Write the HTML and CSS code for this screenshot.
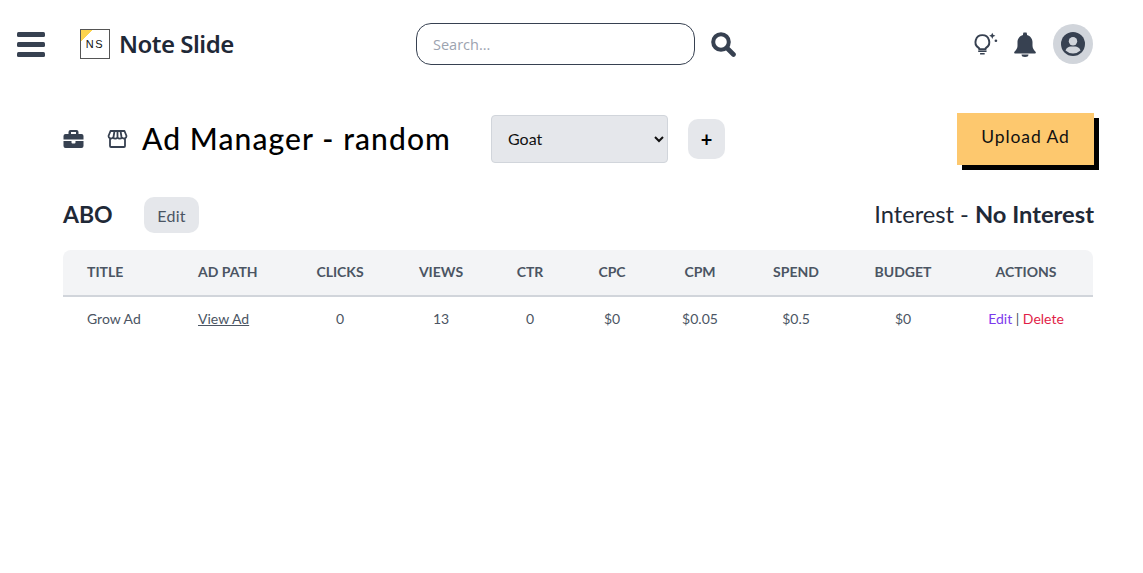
FILE: index.html
```html
<!DOCTYPE html>
<html lang="en">
<head>
  <meta charset="UTF-8">
  <meta name="viewport" content="width=device-width, initial-scale=1.0">
  <title>Note Slide - Ad Manager</title>
  <link rel="stylesheet" href="styles.css">
</head>
<body>
  <!-- Top bar -->
  <header class="topbar">
    <svg class="menu-icon" viewBox="0 0 28 25"><rect y="0" width="28" height="5" rx="1.500"/><rect y="10" width="28" height="5" rx="1.500"/><rect y="20" width="28" height="5" rx="1.500"/></svg>
    <div class="logo">
      <div class="logo-box">NS</div>
      <span class="logo-name">Note Slide</span>
    </div>
    <div class="search">
      <input type="text" class="search-input" placeholder="Search...">
      <svg class="search-icon" viewBox="0 0 25 25"><circle cx="10" cy="10" r="7.8" fill="none" stroke-width="4"/><path d="M16 16l6.5 6.5" fill="none" stroke-width="4.6" stroke-linecap="round"/></svg>
    </div>
    <div class="top-actions">
      <svg class="bulb-icon" viewBox="0 0 24 24"><path d="M9 3a6.600 6.600 0 0 0-3.800 12c.7.500.9 1 .9 1.600h5.800c0-.6.200-1.100.9-1.600A6.600 6.600 0 0 0 9 3z" fill="none" stroke="#374151" stroke-width="1.900"/><path d="M5 18.400h8M6.800 20.800h4.400" stroke="#374151" stroke-width="1.500" fill="none"/><path d="M18.500 .6l.9 2.100 2.100.9-2.100.9-.9 2.100-.9-2.100-2.100-.9 2.100-.9z" fill="#374151"/><circle cx="22" cy="8.400" r="1.300" fill="#374151"/></svg>
      <svg class="bell-icon" viewBox="0 0 22 25"><path d="M11 0a2 2 0 0 0-2 2v.9C5.600 3.800 3.500 6.700 3.500 10v3.500c0 2.500-1 4.300-3 6.200-.7.700-.2 1.800.8 1.800h19.400c1 0 1.500-1.100.8-1.800-2-1.900-3-3.700-3-6.200V10c0-3.300-2.100-6.200-5.500-7.100V2a2 2 0 0 0-2-2z"/><path d="M7.500 22.500h7a3.500 2.500 0 0 1-7 0z"/></svg>
      <div class="avatar">
        <svg viewBox="0 0 24 24"><circle cx="12" cy="12" r="12" fill="#374151"/><circle cx="12" cy="9.300" r="4.200" fill="#d1d5db"/><path d="M4.500 18.500c1-3 3.500-4 5-4h5c1.500 0 4 1 5 4a11 11 0 0 1-15 0z" fill="#d1d5db"/></svg>
      </div>
    </div>
  </header>

  <main class="content">
    <div class="title-row">
      <svg class="title-icon" viewBox="0 0 20 18"><path d="M7 0h6a2 2 0 0 1 2 2v2h3a2 2 0 0 1 2 2v3.500H0V6a2 2 0 0 1 2-2h3V2a2 2 0 0 1 2-2zm.5 2v2h5V2z" fill-rule="evenodd"/><path d="M0 11h8v1.500a1 1 0 0 0 1 1h2a1 1 0 0 0 1-1V11h8v5a2 2 0 0 1-2 2H2a2 2 0 0 1-2-2z"/></svg>
      <svg class="store-icon" viewBox="0 0 20 18"><path d="M3 1h14l2 5a2.500 2.500 0 0 1-4.500 1.500 2.700 2.700 0 0 1-4.500 0 2.700 2.700 0 0 1-4.500 0A2.500 2.500 0 0 1 1 6z M2.500 8.500V16a1 1 0 0 0 1 1h13a1 1 0 0 0 1-1V8.500 M7 1L6 7 M13 1l1 6 M10 1v6" fill="none" stroke="#374151" stroke-width="1.800" stroke-linejoin="round"/></svg>
      <h1>Ad Manager - random</h1>
      <select class="goal-select">
        <option>Goat</option>
      </select>
      <button class="add-btn">+</button>
      <button class="upload-btn">Upload Ad</button>
    </div>

    <div class="info-row">
      <h2>ABO</h2>
      <button class="edit-btn">Edit</button>
      <p class="interest">Interest - <b>No Interest</b></p>
    </div>

    <table class="ads-table">
      <colgroup>
        <col class="c-title"><col class="c-path"><col class="c-clicks"><col class="c-views"><col class="c-ctr">
        <col class="c-cpc"><col class="c-cpm"><col class="c-spend"><col class="c-budget"><col class="c-actions">
      </colgroup>
      <thead>
        <tr>
          <th class="left">TITLE</th>
          <th class="left">AD PATH</th>
          <th>CLICKS</th>
          <th>VIEWS</th>
          <th>CTR</th>
          <th>CPC</th>
          <th>CPM</th>
          <th>SPEND</th>
          <th>BUDGET</th>
          <th>ACTIONS</th>
        </tr>
      </thead>
      <tbody>
        <tr>
          <td class="left">Grow Ad</td>
          <td class="left"><a href="#" class="view-link">View Ad</a></td>
          <td>0</td>
          <td>13</td>
          <td>0</td>
          <td>$0</td>
          <td>$0.05</td>
          <td>$0.5</td>
          <td>$0</td>
          <td><a href="#" class="edit-link">Edit</a> | <a href="#" class="delete-link">Delete</a></td>
        </tr>
      </tbody>
    </table>
  </main>
</body>
</html>
```

FILE: styles.css
```css
* {
  margin: 0;
  padding: 0;
  box-sizing: border-box;
}
body {
  font-family: Lato, sans-serif;
  color: #374151;
  background-color: #fff;
}
.topbar {
  display: flex;
  align-items: center;
  height: 88px;
  padding: 0 50px 0 17px;
}
.menu-icon {
  width: 28px;
  height: 25px;
  fill: #374151;
}
.logo {
  display: flex;
  align-items: center;
  margin-left: 35px;
  width: 336px;
}
.logo-box {
  width: 30px;
  height: 30px;
  border: 1px solid #555;
  background: linear-gradient(135deg, #fcd34d 0, #fcd34d 20%, #fff 20%);
  color: #111;
  font-family: "Liberation Sans", sans-serif;
  font-size: 11px;
  letter-spacing: 1.5px;
  text-align: center;
  line-height: 29px;
}
.logo-name {
  margin-left: 9px;
  padding-bottom: 2px;
  font-family: "Noto Sans", sans-serif;
  font-size: 24px;
  font-weight: 600;
  letter-spacing: -0.5px;
  color: #1f2937;
}
.search {
  display: flex;
  align-items: center;
}
.search-input {
  width: 279px;
  height: 42px;
  padding: 0 16px;
  border: 1px solid #374151;
  border-radius: 15px;
  font-family: "Open Sans", sans-serif;
  font-size: 14.500px;
}
.search-input::placeholder {
  color: #9ca3af;
}
.search-icon {
  width: 25px;
  height: 25px;
  margin-left: 16px;
  stroke: #374151;
}
.top-actions {
  display: flex;
  align-items: center;
  margin-left: auto;
}
.bulb-icon {
  width: 25px;
  height: 25px;
}
.bell-icon {
  width: 22px;
  height: 25px;
  margin-left: 16px;
  fill: #374151;
}
.avatar {
  display: flex;
  align-items: center;
  justify-content: center;
  width: 40px;
  height: 40px;
  margin-left: 17px;
  border-radius: 50%;
  background-color: #d1d5db;
}
.avatar svg {
  width: 24px;
  height: 24px;
}
.content {
  padding: 25px 49px 0 63px;
}
.title-row {
  display: flex;
  align-items: center;
  height: 52px;
}
.title-icon {
  width: 21px;
  height: 18px;
  fill: #374151;
}
.store-icon {
  width: 21px;
  height: 18px;
  margin-left: 23px;
}
h1 {
  margin-left: 14px;
  width: 349px;
  padding-bottom: 2px;
  font-size: 30px;
  font-weight: 500;
  color: #000;
  letter-spacing: 1.1px;
}
.goal-select {
  width: 177px;
  height: 48px;
  padding-left: 12px;
  padding-bottom: 2px;
  background-color: #e5e7eb;
  border: 1px solid #d1d5db;
  border-radius: 4px;
  font-family: Lato, sans-serif;
  font-size: 16px;
  color: #111;
}
.add-btn {
  width: 37px;
  height: 40px;
  margin-left: 20px;
  background-color: #e5e7eb;
  border: none;
  border-radius: 10px;
  font-family: Lato, sans-serif;
  font-size: 20px;
  font-weight: bold;
  color: #000;
}
.upload-btn {
  width: 137px;
  height: 52px;
  margin-left: auto;
  padding-bottom: 5px;
  background-color: #fdc86e;
  border: none;
  box-shadow: 5px 5px 0 #000;
  font-family: Lato, sans-serif;
  font-size: 17.500px;
  letter-spacing: 0.9px;
  color: #111;
}
.info-row {
  display: flex;
  align-items: center;
  height: 36px;
  margin-top: 32px;
}
h2 {
  width: 81px;
  padding-bottom: 3px;
  font-size: 23px;
  font-weight: 700;
  color: #1f2937;
}
.edit-btn {
  width: 55px;
  height: 36px;
  background-color: #e5e7eb;
  border: none;
  border-radius: 10px;
  font-family: Lato, sans-serif;
  font-size: 16px;
  letter-spacing: 0.3px;
  color: #4b5563;
}
.interest {
  margin-left: auto;
  padding-bottom: 3px;
  font-size: 23.700px;
  color: #1f2937;
}
.interest b {
  font-weight: 700;
}
.ads-table {
  width: 1030px;
  margin-top: 17px;
  table-layout: fixed;
  border-collapse: separate;
  border-spacing: 0;
  font-size: 14px;
}
.c-title { width: 111px; }
.c-path { width: 115px; }
.c-clicks { width: 102px; }
.c-views { width: 100px; }
.c-ctr { width: 78px; }
.c-cpc { width: 86px; }
.c-cpm { width: 90px; }
.c-spend { width: 102px; }
.c-budget { width: 112px; }
.c-actions { width: 134px; }
.ads-table th {
  height: 47px;
  padding-bottom: 2px;
  background-color: #f3f4f6;
  border-bottom: 2px solid #d1d5db;
  font-weight: 700;
  color: #4b5563;
  text-align: center;
}
.ads-table th:first-child {
  border-top-left-radius: 8px;
}
.ads-table th:last-child {
  border-top-right-radius: 8px;
}
.ads-table td {
  height: 46px;
  padding-bottom: 3px;
  text-align: center;
  color: #4b5563;
}
.ads-table .left {
  padding-left: 24px;
  text-align: left;
}
.view-link {
  color: #4b5563;
}
.edit-link {
  color: #7c3aed;
  text-decoration: none;
}
.delete-link {
  color: #e11d48;
  text-decoration: none;
}
```
